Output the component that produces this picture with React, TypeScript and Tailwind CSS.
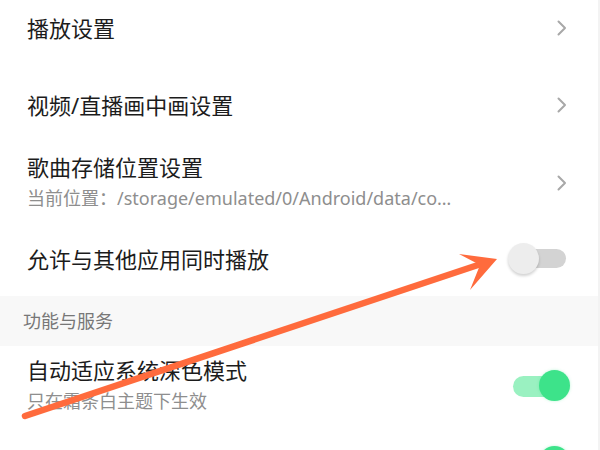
import React from "react";

const font = { fontFamily: '"Noto Sans", "Noto Sans CJK SC", sans-serif' };

function Chevron() {
  return (
    <svg width="12" height="16" viewBox="0 0 12 16" className="shrink-0">
      <path d="M2.5 1.5 L9 8 L2.5 14.5" fill="none" stroke="#a8a8a8" strokeWidth="2" strokeLinecap="round" strokeLinejoin="round" />
    </svg>
  );
}

function ToggleOff() {
  return (
    <div className="relative w-[58px] h-[32px] shrink-0">
      <div className="absolute left-[10px] top-[6px] w-[48px] h-[19px] rounded-full bg-[#d3d3d3]" />
      <div className="absolute left-0 top-0 w-[31px] h-[31px] rounded-full bg-[#ededed] shadow-[0_2px_3px_rgba(0,0,0,0.18)]" />
    </div>
  );
}

function ToggleOn() {
  return (
    <div className="relative w-[57px] h-[32px] shrink-0">
      <div className="absolute left-0 top-[6px] w-[46px] h-[21px] rounded-full bg-[#9af1c1]" />
      <div className="absolute right-0 top-0 w-[31px] h-[31px] rounded-full bg-[#3de38a] shadow-[0_0_3px_rgba(61,227,138,0.35)]" />
    </div>
  );
}

export default function App() {
  return (
    <div className="relative w-[600px] h-[450px] overflow-hidden bg-white" style={font}>
      <div className="flex flex-col border-r-2 border-[#f3f3f3]">
        <div className="mt-[-10px] h-[76px] flex items-center justify-between pl-[27px] pr-[30px]">
          <span className="text-[22px] text-[#1c1c1c]">播放设置</span>
          <Chevron />
        </div>
        <div className="h-[78px] flex items-center justify-between pl-[27px] pr-[30px]">
          <span className="text-[22px] text-[#1c1c1c]">视频/直播画中画设置</span>
          <Chevron />
        </div>
        <div className="h-[78px] flex items-center justify-between pl-[27px] pr-[30px]">
          <div className="flex flex-col">
            <span className="text-[22px] leading-[30px] text-[#1c1c1c]">歌曲存储位置设置</span>
            <span className="text-[18px] leading-[32px] text-[#8e8e8e]">当前位置：/storage/emulated/0/Android/data/co…</span>
          </div>
          <Chevron />
        </div>
        <div className="h-[74px] flex items-center justify-between pl-[27px] pr-[32px]">
          <span className="text-[22px] text-[#1c1c1c]">允许与其他应用同时播放</span>
          <ToggleOff />
        </div>
        <div className="h-[50px] flex items-center pl-[23px] bg-[#f8f8f8]">
          <span className="text-[18px] text-[#777]">功能与服务</span>
        </div>
        <div className="h-[80px] flex items-center justify-between pl-[27px] pr-[28px]">
          <div className="flex flex-col">
            <span className="text-[22px] leading-[30px] text-[#1c1c1c]">自动适应系统深色模式</span>
            <span className="text-[18px] leading-[32px] text-[#8e8e8e]">只在霜条白主题下生效</span>
          </div>
          <ToggleOn />
        </div>
        <div className="h-[72px] flex items-center justify-end pr-[28px]">
          <ToggleOn />
        </div>
      </div>
      <svg className="absolute left-0 top-0 pointer-events-none" width="600" height="450" viewBox="0 0 600 450">
        <line x1="25" y1="416" x2="478" y2="265" stroke="#ff6b3d" strokeWidth="6.5" strokeLinecap="round" />
        <polygon points="497,259 459,254 480,265 470,290" fill="#ff6b3d" />
      </svg>
    </div>
  );
}
